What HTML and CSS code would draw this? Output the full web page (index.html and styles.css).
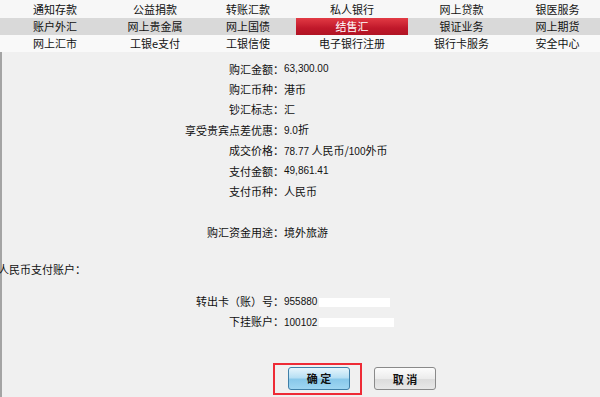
FILE: index.html
```html
<!DOCTYPE html>
<html>
<head>
<meta charset="utf-8">
<link rel="stylesheet" href="styles.css">
</head>
<body>
<nav class="nav">
  <div class="row row-a">
    <span>通知存款</span><span>公益捐款</span><span>转账汇款</span><span>私人银行</span><span>网上贷款</span><span>银医服务</span>
  </div>
  <div class="row row-b">
    <span>账户外汇</span><span>网上贵金属</span><span>网上国债</span><span class="active">结售汇</span><span>银证业务</span><span>网上期货</span>
  </div>
  <div class="row row-c">
    <span>网上汇市</span><span>工银e支付</span><span>工银信使</span><span>电子银行注册</span><span>银行卡服务</span><span>安全中心</span>
  </div>
</nav>
<main class="main">
  <div class="fields">
    <div class="field"><span class="label">购汇金额：</span><span class="value num">63,300.00</span></div>
    <div class="field"><span class="label">购汇币种：</span><span class="value">港币</span></div>
    <div class="field"><span class="label">钞汇标志：</span><span class="value">汇</span></div>
    <div class="field"><span class="label">享受贵宾点差优惠：</span><span class="value"><span class="num">9.0</span>折</span></div>
    <div class="field"><span class="label">成交价格：</span><span class="value"><span class="num">78.77</span>&nbsp;人民币/<span class="num">100</span>外币</span></div>
    <div class="field"><span class="label">支付金额：</span><span class="value num">49,861.41</span></div>
    <div class="field"><span class="label">支付币种：</span><span class="value">人民币</span></div>
  </div>
  <div class="field purpose"><span class="label">购汇资金用途：</span><span class="value">境外旅游</span></div>
  <div class="section-title">人民币支付账户：</div>
  <div class="fields accounts">
    <div class="field"><span class="label">转出卡（账）号：</span><span class="value"><span class="num">955880</span><span class="mask mask-1"></span></span></div>
    <div class="field"><span class="label">下挂账户：</span><span class="value"><span class="num">100102</span><span class="mask mask-2"></span></span></div>
  </div>
  <div class="actions">
    <span class="highlight"><button class="btn btn-ok">确 定</button></span>
    <button class="btn btn-cancel">取 消</button>
  </div>
</main>
</body>
</html>
```

FILE: styles.css
```css
html, body {
  margin: 0;
  padding: 0;
}
body {
  width: 600px;
  height: 397px;
  overflow: hidden;
  background: #f0f0f0;
  font-family: "Noto Sans CJK SC", "Liberation Sans", sans-serif;
  font-size: 11px;
  color: #111;
}
.nav {
  display: flex;
  flex-direction: column;
}
.row {
  display: grid;
  grid-template-columns: 110px 90px 96px 112px 107px 85px;
  height: 17px;
  align-items: stretch;
}
.row span {
  display: flex;
  align-items: center;
  justify-content: center;
  line-height: 1;
  color: #111;
}
.row-a {
  height: 18px;
  background: #f7f7f7;
}
.row-b {
  background: #d9d9d9;
}
.row-c {
  height: 17px;
  background: #f9f9f9;
}
.row span.active {
  background: linear-gradient(#e23a44, #c0182a 60%, #b01424);
  color: #fff;
}
.main {
  border-left: 2px solid #a4a4a4;
  height: 345px;
  box-sizing: border-box;
  padding-top: 7px;
  display: flex;
  flex-direction: column;
}
.fields {
  display: flex;
  flex-direction: column;
}
.field {
  display: flex;
  height: 20.4px;
  align-items: center;
  line-height: 1;
}
.label {
  width: 282px;
  text-align: right;
  flex: none;
}
.value {
  display: block;
  white-space: nowrap;
}
.num {
  font-family: "Liberation Sans", "DejaVu Sans", sans-serif;
  font-size: 10px;
}
.purpose {
  margin-top: 21px;
}
.section-title {
  margin-top: 16px;
  height: 20px;
  line-height: 20px;
  margin-left: -4px;
}
.accounts {
  margin-top: 12px;
}
.mask {
  display: inline-block;
  vertical-align: middle;
  background: #fff;
  height: 9px;
}
.mask-1 {
  width: 71px;
  margin-left: 2px;
}
.mask-2 {
  width: 75px;
  margin-left: 2px;
}
.actions {
  display: flex;
  align-items: center;
  margin-top: 31px;
  padding-left: 271px;
  gap: 12px;
}
.highlight {
  display: flex;
  border: 2px solid #ee2b36;
  padding: 2px 10px 3px 13px;
}
.btn {
  font-family: "Noto Sans CJK SC", sans-serif;
  font-size: 11px;
  font-weight: bold;
  height: 23px;
  padding: 0;
  margin: 0;
  border-radius: 3px;
  color: #111;
}
.btn-ok {
  width: 62px;
  border: 1px solid #3f7fa8;
  background: linear-gradient(#e6f5fc, #b8e0f4 45%, #88c8ea 55%, #9fd6f2);
}
.btn-cancel {
  width: 62px;
  border: 1px solid #8a8a8a;
  background: linear-gradient(#fcfcfc, #ececec 50%, #dcdcdc 55%, #e8e8e8);
}
```
